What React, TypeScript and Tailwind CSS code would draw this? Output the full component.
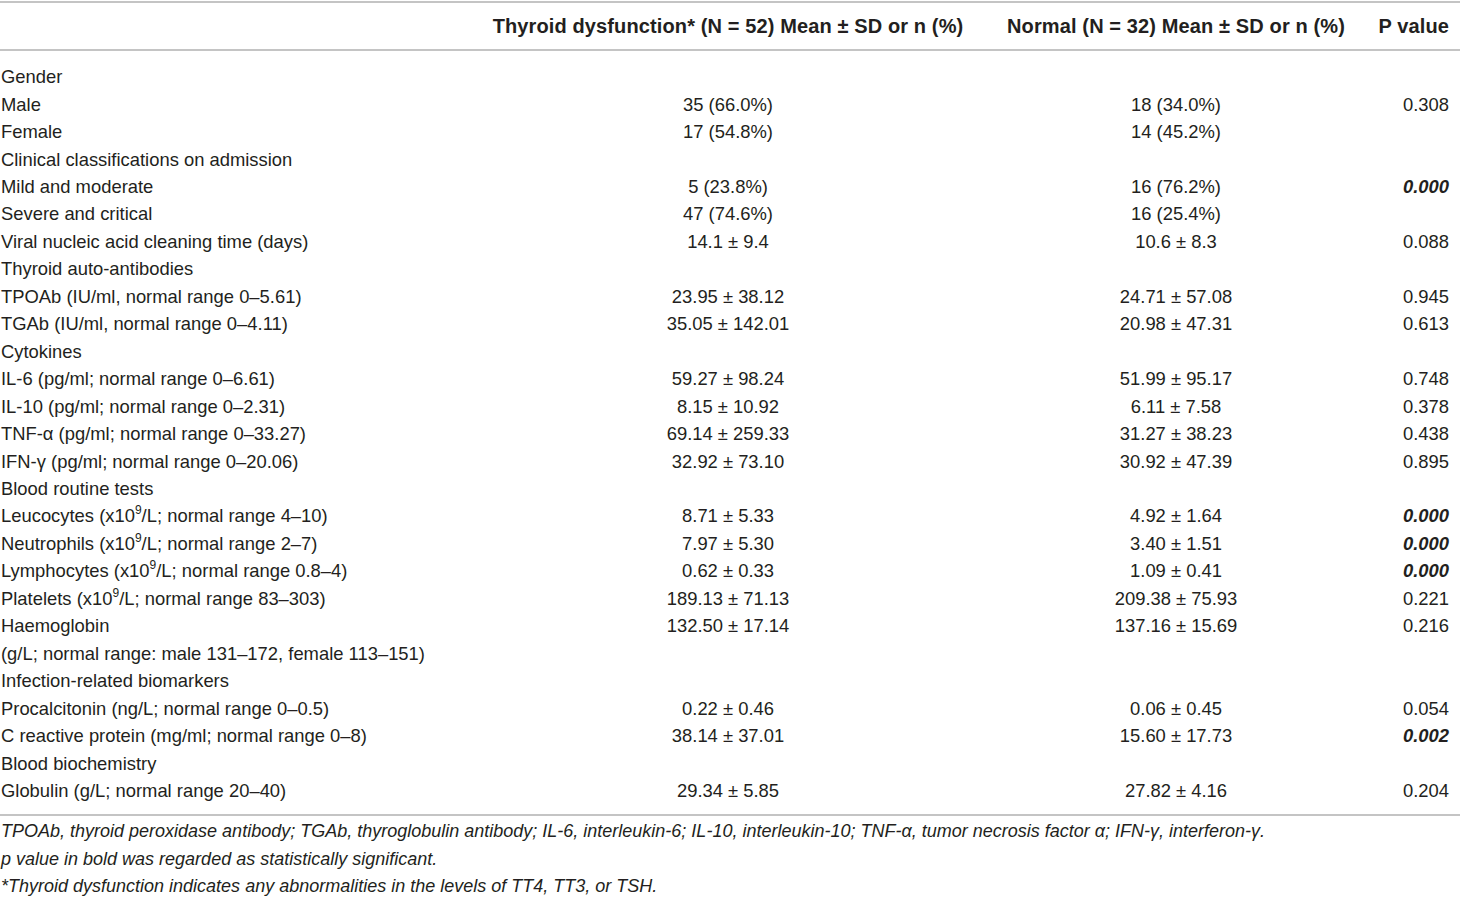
import React from "react";

type Row = {
  label: React.ReactNode;
  a?: string;
  b?: string;
  p?: string;
  sig?: boolean;
};

const x109 = (
  <>
    x10<sup className="relative -top-[0.1em] text-[12px] align-super leading-none">9</sup>/L
  </>
);

const rows: Row[] = [
  { label: "Gender" },
  { label: "Male", a: "35 (66.0%)", b: "18 (34.0%)", p: "0.308" },
  { label: "Female", a: "17 (54.8%)", b: "14 (45.2%)" },
  { label: "Clinical classifications on admission" },
  { label: "Mild and moderate", a: "5 (23.8%)", b: "16 (76.2%)", p: "0.000", sig: true },
  { label: "Severe and critical", a: "47 (74.6%)", b: "16 (25.4%)" },
  { label: "Viral nucleic acid cleaning time (days)", a: "14.1 ± 9.4", b: "10.6 ± 8.3", p: "0.088" },
  { label: "Thyroid auto-antibodies" },
  { label: "TPOAb (IU/ml, normal range 0–5.61)", a: "23.95 ± 38.12", b: "24.71 ± 57.08", p: "0.945" },
  { label: "TGAb (IU/ml, normal range 0–4.11)", a: "35.05 ± 142.01", b: "20.98 ± 47.31", p: "0.613" },
  { label: "Cytokines" },
  { label: "IL-6 (pg/ml; normal range 0–6.61)", a: "59.27 ± 98.24", b: "51.99 ± 95.17", p: "0.748" },
  { label: "IL-10 (pg/ml; normal range 0–2.31)", a: "8.15 ± 10.92", b: "6.11 ± 7.58", p: "0.378" },
  { label: "TNF-α (pg/ml; normal range 0–33.27)", a: "69.14 ± 259.33", b: "31.27 ± 38.23", p: "0.438" },
  { label: "IFN-γ (pg/ml; normal range 0–20.06)", a: "32.92 ± 73.10", b: "30.92 ± 47.39", p: "0.895" },
  { label: "Blood routine tests" },
  { label: <>Leucocytes ({x109}; normal range 4–10)</>, a: "8.71 ± 5.33", b: "4.92 ± 1.64", p: "0.000", sig: true },
  { label: <>Neutrophils ({x109}; normal range 2–7)</>, a: "7.97 ± 5.30", b: "3.40 ± 1.51", p: "0.000", sig: true },
  { label: <>Lymphocytes ({x109}; normal range 0.8–4)</>, a: "0.62 ± 0.33", b: "1.09 ± 0.41", p: "0.000", sig: true },
  { label: <>Platelets ({x109}; normal range 83–303)</>, a: "189.13 ± 71.13", b: "209.38 ± 75.93", p: "0.221" },
  { label: "Haemoglobin", a: "132.50 ± 17.14", b: "137.16 ± 15.69", p: "0.216" },
  { label: "(g/L; normal range: male 131–172, female 113–151)" },
  { label: "Infection-related biomarkers" },
  { label: "Procalcitonin (ng/L; normal range 0–0.5)", a: "0.22 ± 0.46", b: "0.06 ± 0.45", p: "0.054" },
  { label: "C reactive protein (mg/ml; normal range 0–8)", a: "38.14 ± 37.01", b: "15.60 ± 17.73", p: "0.002", sig: true },
  { label: "Blood biochemistry" },
  { label: "Globulin (g/L; normal range 20–40)", a: "29.34 ± 5.85", b: "27.82 ± 4.16", p: "0.204" },
];

const grid = "grid grid-cols-[473px_510px_386px_1fr]";

export default function App() {
  return (
    <div className="w-[1460px] h-[897px] bg-white text-[#231f20] font-['Liberation_Sans',Arial,sans-serif] text-[18.4px] overflow-hidden">
      <div className="pt-px">
        <div className={`${grid} h-[50px] items-center border-y-2 border-[#c4c4c4] font-bold text-[20px] tracking-[0.12px]`}>
          <div />
          <div className="text-center">Thyroid dysfunction* (N = 52) Mean ± SD or n (%)</div>
          <div className="text-center">Normal (N = 32) Mean ± SD or n (%)</div>
          <div className="text-right pr-[11px]">P value</div>
        </div>
        <div className="pt-[12px] pb-[10px] border-b-2 border-[#c4c4c4]">
          {rows.map((r, i) => (
            <div key={i} className={`${grid} h-[27.46px] items-center leading-[27px]`}>
              <div className="pl-[1px] whitespace-nowrap">{r.label}</div>
              <div className="text-center">{r.a}</div>
              <div className="text-center">{r.b}</div>
              <div className={`text-right pr-[11px] ${r.sig ? "font-bold italic" : ""}`}>{r.p}</div>
            </div>
          ))}
        </div>
        <div className="pt-[2px] italic text-[18px] leading-[27.5px] pl-[1px] whitespace-nowrap">
          <div>
            TPOAb, thyroid peroxidase antibody; TGAb, thyroglobulin antibody; IL-6, interleukin-6; IL-10, interleukin-10; TNF-α, tumor necrosis factor α; IFN-γ, interferon-γ.
          </div>
          <div>p value in bold was regarded as statistically significant.</div>
          <div>*Thyroid dysfunction indicates any abnormalities in the levels of TT4, TT3, or TSH.</div>
        </div>
      </div>
    </div>
  );
}
